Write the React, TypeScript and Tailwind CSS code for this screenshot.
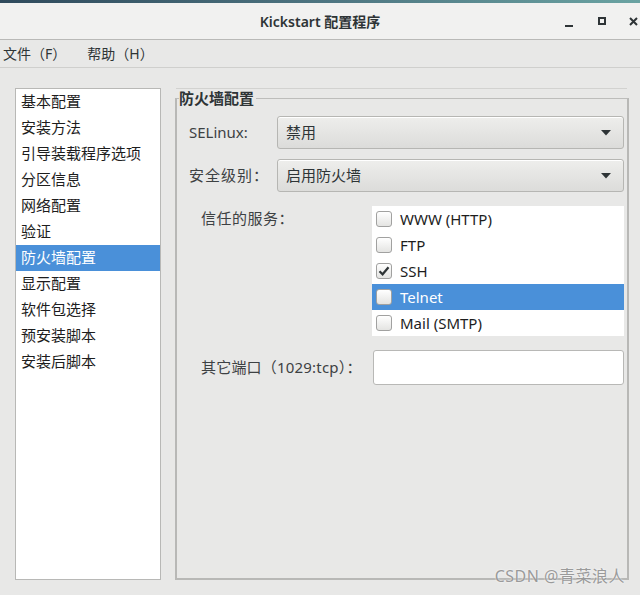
import { useState } from 'react';

const sections = [
  '基本配置',
  '安装方法',
  '引导装载程序选项',
  '分区信息',
  '网络配置',
  '验证',
  '防火墙配置',
  '显示配置',
  '软件包选择',
  '预安装脚本',
  '安装后脚本',
];

const services = [
  { name: 'WWW (HTTP)', checked: false },
  { name: 'FTP', checked: false },
  { name: 'SSH', checked: true },
  { name: 'Telnet', checked: false },
  { name: 'Mail (SMTP)', checked: false },
];

const font = { fontFamily: '"Noto Sans", "Noto Sans CJK SC", sans-serif' };

const Combo = ({ value }: { value: string }) => (
  <div className="flex-1 h-[33px] flex items-center justify-between pl-[8px] pr-[12px] rounded-[3px] border border-[#b6b6b3] bg-gradient-to-b from-[#eeeeec] to-[#dcdcda] text-[#2e3436] text-[15px] shadow-[inset_0_1px_0_#ffffff]">
    <span>{value}</span>
    <svg width="10" height="6" viewBox="0 0 10 6">
      <path d="M0 0 L10 0 L5 5.5 Z" fill="#2e3436" />
    </svg>
  </div>
);

const CheckBox = ({ checked }: { checked: boolean }) => (
  <div className="w-[16px] h-[16px] rounded-[3px] border border-[#a1a1a0] bg-gradient-to-b from-[#ffffff] to-[#e4e4e2] flex items-center justify-center">
    {checked && (
      <svg width="12" height="12" viewBox="0 0 12 12">
        <path d="M1.5 6.2 L4.6 9.3 L10.5 2.2" stroke="#2e3436" strokeWidth="2.2" fill="none" />
      </svg>
    )}
  </div>
);

export default function App() {
  const [active, setActive] = useState(6);
  const [selectedService, setSelectedService] = useState(3);

  return (
    <div className="w-[640px] h-[595px] bg-[#e8e8e7] flex flex-col overflow-hidden relative text-[#2e3436]" style={font}>
      {/* title bar */}
      <div className="h-[3px] bg-gradient-to-r from-[#2f4a5c] via-[#4d7480] to-[#6aa3a2]" />
      <div className="h-[37px] bg-[#f1f1f0] border-b border-[#b9b9b7] flex items-center relative">
        <div className="flex-1 text-center text-[14px] font-semibold text-[#2e3436] pt-[1px]">Kickstart 配置程序</div>
        <div className="absolute right-0 top-0 h-full flex items-center">
          <div className="w-[8px] h-[2px] bg-[#2e3436] mt-[10px] mr-[25px]" />
          <div className="w-[8px] h-[8px] border-2 border-[#2e3436] mr-[23px]" />
          <svg width="9" height="9" viewBox="0 0 9 9" className="mr-[2px]">
            <path d="M1 1 L8 8 M8 1 L1 8" stroke="#2e3436" strokeWidth="2" />
          </svg>
        </div>
      </div>

      {/* menu bar */}
      <div className="h-[28px] border-b border-[#cfcfcd] flex items-center text-[14px] pl-[3px] gap-[21px]">
        <span>文件（F）</span>
        <span>帮助（H）</span>
      </div>

      {/* body */}
      <div className="flex pt-[20px] pl-[15px]">
        <div className="w-[146px] h-[492px] bg-white border border-[#b8b8b6] flex flex-col text-[15px]">
          {sections.map((s, i) => (
            <div
              key={s}
              onClick={() => setActive(i)}
              className={
                'h-[26px] flex items-center pl-[5px] pb-[2px] cursor-default ' +
                (i === active ? 'bg-[#4a90d9] text-white' : 'text-[#1d1d1d]')
              }
            >
              {s}
            </div>
          ))}
        </div>

        <div className="ml-[14px] w-[454px] h-[492px] flex flex-col">
          <div className="h-[1px] bg-[#d2d2d0] ml-[1px] mr-[2px]" />
          <fieldset className="flex-1 min-w-0 border-x-2 border-b-2 border-t border-[#b8b8b6] border-t-[#bdbdbb] px-[2px] pb-0 m-0">
            <legend className="px-0 ml-0 text-[15px] font-bold leading-[18px] text-[#2e3436] pr-[2px]">防火墙配置</legend>

            <div className="flex flex-col pt-[9px] pl-[10px] pr-[1px]">
              <div className="flex items-center">
                <div className="w-[88px] text-[15px] text-[#3d4143]">SELinux:</div>
                <Combo value="禁用" />
              </div>
              <div className="flex items-center mt-[10px]">
                <div className="w-[88px] text-[15px] text-[#3d4143] tracking-[1px]">安全级别：</div>
                <Combo value="启用防火墙" />
              </div>

              <div className="flex mt-[14px]">
                <div className="w-[183px] pl-[12px] pt-[1px] text-[15px] text-[#3d4143] tracking-[0.5px]">信任的服务：</div>
                <div className="flex-1 bg-white flex flex-col">
                  {services.map((svc, i) => (
                    <div
                      key={svc.name}
                      onClick={() => setSelectedService(i)}
                      className={
                        'h-[26px] flex items-center pl-[4px] gap-[8px] text-[15px] ' +
                        (i === selectedService ? 'bg-[#4a90d9] text-white' : 'text-[#1d1d1d]')
                      }
                    >
                      <CheckBox checked={svc.checked} />
                      <span>{svc.name}</span>
                    </div>
                  ))}
                </div>
              </div>

              <div className="flex items-center mt-[14px]">
                <div className="w-[184px] pl-[12px] text-[15px] text-[#3d4143] tracking-[0.2px]">其它端口（1029:tcp）：</div>
                <div className="flex-1 h-[35px] bg-white rounded-[3px] border border-[#b8b8b6]" />
              </div>
            </div>
          </fieldset>
        </div>
      </div>

      <div className="absolute right-[15px] bottom-[7px] text-[16px] text-[#9a9a9a] tracking-[0.5px] [text-shadow:0_0_2px_#ffffff]">CSDN @青菜浪人</div>
    </div>
  );
}
